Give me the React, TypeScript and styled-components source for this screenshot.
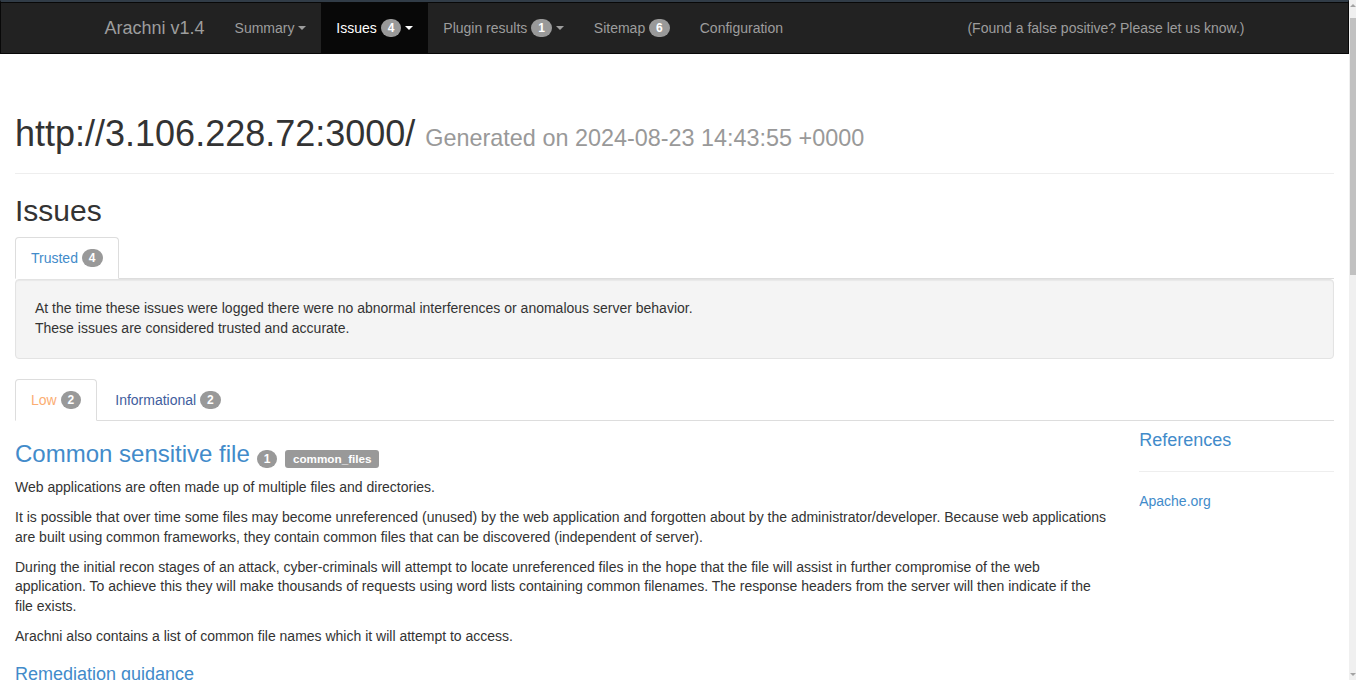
import React from "react";
import styled, { createGlobalStyle, css } from "styled-components";

const GlobalStyle = createGlobalStyle`
  html, body { margin: 0; height: 100%; overflow: hidden; }
  body {
    font-family: "Liberation Sans", Arial, Helvetica, sans-serif;
    font-size: 14px;
    line-height: 1.428571;
    color: #333;
    background: #fff;
  }
  * { box-sizing: border-box; }
`;

const LINK = "#428bca";

const Shell = styled.div`
  display: flex;
  height: 100vh;
  overflow: hidden;
`;

const Page = styled.div`
  flex: 1;
  min-width: 0;
  overflow: hidden;
`;

const ScrollTrack = styled.div`
  flex: 0 0 7px;
  display: flex;
  flex-direction: column;
  background: #f0f0f0;
`;

const ScrollButton = styled.div<{ $down?: boolean }>`
  height: 17px;
  display: flex;
  justify-content: center;
  align-items: ${(p) => (p.$down ? "flex-end" : "flex-start")};
  padding: ${(p) => (p.$down ? "0 0 4px" : "4px 0 0")};
  ${(p) => p.$down && "margin-top: auto;"}
`;

const Arrow = styled.span<{ $down?: boolean }>`
  width: 0;
  height: 0;
  border-left: 3px solid transparent;
  border-right: 3px solid transparent;
  ${(p) =>
    p.$down ? "border-top: 3px solid #a3a3a3;" : "border-bottom: 3px solid #a3a3a3;"}
`;

const Thumb = styled.div`
  margin: 1px 0 0 1px;
  height: 257px;
  background: #c1c1c1;
`;

const Navbar = styled.nav`
  background: #222;
  border-top: 2px solid #313c47;
  border-left: 1px solid #080808;
  border-right: 1px solid #080808;
  border-bottom: 1px solid #080808;
  box-shadow: inset 0 1px 0 #080808;
  padding-top: 1px;
  height: 54px;
`;

const NavContainer = styled.div`
  width: 1170px;
  margin: 0 auto;
  padding: 0 15px;
  display: flex;
  align-items: stretch;
  height: 50px;
`;

const Brand = styled.a`
  margin-left: -15px;
  padding: 15px;
  font-size: 18px;
  line-height: 20px;
  height: 50px;
  color: #9d9d9d;
  text-decoration: none;
`;

const NavList = styled.ul`
  list-style: none;
  margin: 0;
  padding: 0;
  display: flex;
`;

const NavItem = styled.li<{ $active?: boolean }>`
  display: block;
  padding: 15px;
  line-height: 20px;
  color: #9d9d9d;
  white-space: nowrap;
  ${(p) =>
    p.$active &&
    css`
      background: #080808;
      color: #fff;
    `}
`;

const Caret = styled.span`
  display: inline-block;
  width: 0;
  height: 0;
  vertical-align: middle;
  border-top: 4px solid currentColor;
  border-right: 4px solid transparent;
  border-left: 4px solid transparent;
  position: relative;
  top: -1px;
`;

const Badge = styled.span`
  display: inline-block;
  min-width: 10px;
  padding: 3px 7px;
  font-size: 12px;
  font-weight: bold;
  line-height: 1;
  color: #fff;
  text-align: center;
  white-space: nowrap;
  vertical-align: middle;
  background-color: #999;
  border-radius: 10px;
  position: relative;
  top: -1px;
`;

const NavbarText = styled.p`
  margin: 15px 0 15px auto;
  line-height: 20px;
  color: #9d9d9d;
  white-space: nowrap;
`;

const Main = styled.main`
  padding: 20px 15px 40px;
`;

const PageHeader = styled.div`
  margin: 40px 0 20px;
  padding-bottom: 19px;
  border-bottom: 1px solid #eee;
`;

const H1 = styled.h1`
  margin: 0;
  font-size: 36px;
  line-height: 1.1;
  font-weight: 500;
`;

const Small = styled.small`
  font-size: 65%;
  color: #999;
  font-weight: normal;
`;

const H2 = styled.h2`
  margin: 20px 0 10px;
  font-size: 30px;
  line-height: 1.1;
  font-weight: 500;
`;

const Tabs = styled.ul`
  list-style: none;
  margin: 0;
  padding: 0;
  display: flex;
  border-bottom: 1px solid #ddd;
`;

const Tab = styled.li<{ $active?: boolean; $color?: string }>`
  margin-right: 2px;
  margin-bottom: -1px;
  padding: 10px 15px;
  line-height: 20px;
  border: 1px solid transparent;
  border-radius: 4px 4px 0 0;
  color: ${(p) => p.$color || LINK};
  white-space: nowrap;
  ${(p) =>
    p.$active &&
    css`
      border-color: #ddd #ddd transparent;
      background: #fff;
    `}
`;

const Well = styled.div`
  margin-bottom: 20px;
  padding: 19px;
  background: #f4f4f4;
  border: 1px solid #e3e3e3;
  border-radius: 4px;
  box-shadow: inset 0 1px 1px rgba(0, 0, 0, 0.05);
`;

const Row = styled.div`
  display: flex;
  margin: 0 -15px;
`;

const Col = styled.div<{ $span: number }>`
  flex: 0 0 ${(p) => (p.$span / 12) * 100}%;
  max-width: ${(p) => (p.$span / 12) * 100}%;
  padding: 0 15px;
`;

const IssueTitle = styled.h3`
  margin: 20px 0 10px;
  font-size: 24px;
  line-height: 1.1;
  font-weight: 500;
  color: ${LINK};
  display: flex;
  align-items: flex-end;
  gap: 7px;
`;

const TitleText = styled.span``;

const TitleBadge = styled(Badge)`
  top: 0;
  vertical-align: baseline;
`;

const Label = styled.span`
  display: inline-block;
  height: 18px;
  padding: 0 7.5px;
  font-size: 11.7px;
  font-weight: bold;
  line-height: 18px;
  color: #fff;
  background: #999;
  border-radius: 3px;
  margin-left: 1px;
`;

const P = styled.p`
  margin: 0 0 10px;
`;

const SubHeading = styled.h4`
  margin: 18px 0 10px;
  font-size: 18px;
  line-height: 1.1;
  font-weight: 500;
  color: ${LINK};
`;

const SideHeading = styled.h4`
  margin: 10px 0 10px;
  font-size: 18px;
  line-height: 1.1;
  font-weight: 500;
  color: ${LINK};
`;

const Rule = styled.hr`
  margin: 20px 0;
  border: 0;
  border-top: 1px solid #eee;
`;

const Link = styled.a`
  color: ${LINK};
  text-decoration: none;
`;

export default function App() {
  return (
    <Shell>
      <GlobalStyle />
      <Page>
        <Navbar>
          <NavContainer>
            <Brand>Arachni v1.4</Brand>
            <NavList>
              <NavItem>
                Summary <Caret />
              </NavItem>
              <NavItem $active>
                Issues <Badge>4</Badge> <Caret />
              </NavItem>
              <NavItem>
                Plugin results <Badge>1</Badge> <Caret />
              </NavItem>
              <NavItem>
                Sitemap <Badge>6</Badge>
              </NavItem>
              <NavItem>Configuration</NavItem>
            </NavList>
            <NavbarText>(Found a false positive? Please let us know.)</NavbarText>
          </NavContainer>
        </Navbar>
        <Main>
          <PageHeader>
            <H1>
              http://3.106.228.72:3000/ <Small>Generated on 2024-08-23 14:43:55 +0000</Small>
            </H1>
          </PageHeader>
          <H2>Issues</H2>
          <Tabs>
            <Tab $active>
              Trusted <Badge>4</Badge>
            </Tab>
          </Tabs>
          <Well>
            At the time these issues were logged there were no abnormal interferences or anomalous server behavior.
            <br />
            These issues are considered trusted and accurate.
          </Well>
          <Tabs>
            <Tab $active $color="#fbad72">
              Low <Badge>2</Badge>
            </Tab>
            <Tab $color="#3f5e9e">
              Informational <Badge>2</Badge>
            </Tab>
          </Tabs>
          <Row>
            <Col $span={10}>
              <IssueTitle>
                <TitleText>Common sensitive file</TitleText>
                <TitleBadge>1</TitleBadge>
                <Label>common_files</Label>
              </IssueTitle>
              <P>Web applications are often made up of multiple files and directories.</P>
              <P>
                It is possible that over time some files may become unreferenced (unused) by the web application and
                forgotten about by the administrator/developer. Because web applications are built using common
                frameworks, they contain common files that can be discovered (independent of server).
              </P>
              <P>
                During the initial recon stages of an attack, cyber-criminals will attempt to locate unreferenced
                files in the hope that the file will assist in further compromise of the web application. To achieve
                this they will make thousands of requests using word lists containing common filenames. The response
                headers from the server will then indicate if the file exists.
              </P>
              <P>Arachni also contains a list of common file names which it will attempt to access.</P>
              <SubHeading>Remediation guidance</SubHeading>
            </Col>
            <Col $span={2}>
              <SideHeading>References</SideHeading>
              <Rule />
              <Link>Apache.org</Link>
            </Col>
          </Row>
        </Main>
      </Page>
      <ScrollTrack aria-hidden>
        <ScrollButton>
          <Arrow />
        </ScrollButton>
        <Thumb />
        <ScrollButton $down>
          <Arrow $down />
        </ScrollButton>
      </ScrollTrack>
    </Shell>
  );
}
